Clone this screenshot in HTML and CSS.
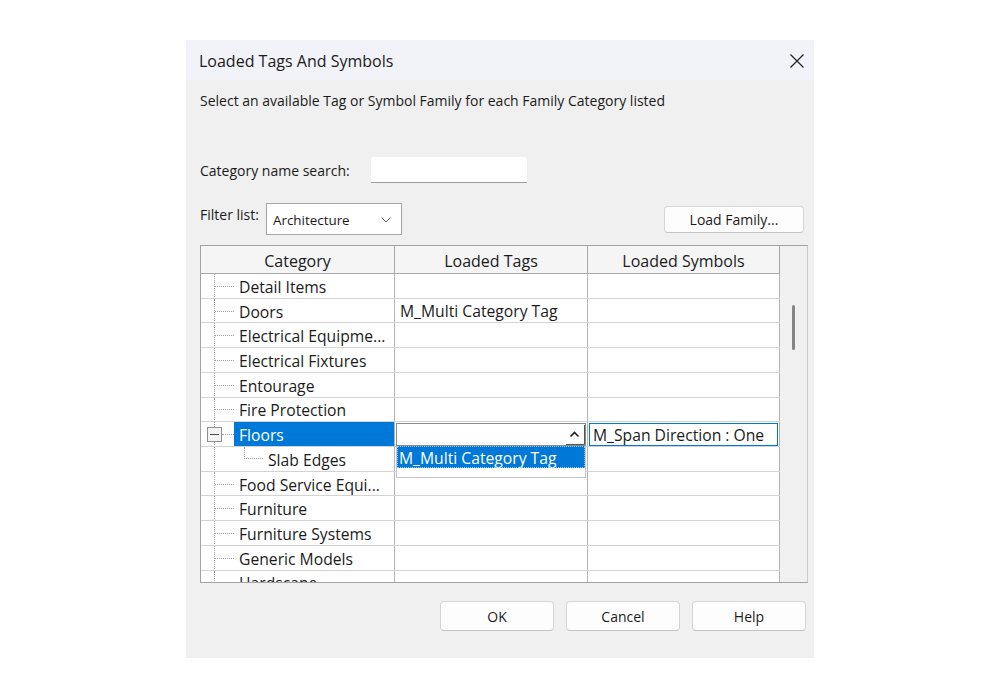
FILE: index.html
```html
<!DOCTYPE html>
<html lang="en">
<head>
<meta charset="utf-8">
<title>Loaded Tags And Symbols</title>
<link rel="stylesheet" href="styles.css">
</head>
<body>
<div class="dialog">
  <div class="titlebar">
    <span class="title">Loaded Tags And Symbols</span>
    <button class="close" aria-label="Close">
      <svg width="16" height="16" viewBox="0 0 16 16"><path d="M1.5 1.5 L14.5 14.5 M14.5 1.5 L1.5 14.5" stroke="#1f1f1f" stroke-width="1.2" fill="none"/></svg>
    </button>
  </div>

  <div class="content">
    <p class="hint">Select an available Tag or Symbol Family for each Family Category listed</p>

    <div class="search-row">
      <label class="label search-label">Category name search:</label>
      <div class="search"></div>
    </div>

    <div class="filter-row">
      <label class="label filter-label">Filter list:</label>
      <div class="select">
        <span>Architecture</span>
        <svg width="10" height="6" viewBox="0 0 10 6"><path d="M0.5 0.5 L5 5 L9.5 0.5" stroke="#666" stroke-width="1" fill="none"/></svg>
      </div>
      <button class="btn load-btn">Load Family...</button>
    </div>

    <div class="grid">
      <div class="table">
        <div class="thead">
          <div class="th c1">Category</div>
          <div class="th c2">Loaded Tags</div>
          <div class="th c3">Loaded Symbols</div>
        </div>

        <div class="row">
          <div class="td c1 tree"><span class="guide"></span><span class="name">Detail Items</span></div>
          <div class="td c2"></div><div class="td c3"></div>
        </div>
        <div class="row">
          <div class="td c1 tree"><span class="guide"></span><span class="name">Doors</span></div>
          <div class="td c2"><span class="val">M_Multi Category Tag</span></div><div class="td c3"></div>
        </div>
        <div class="row">
          <div class="td c1 tree"><span class="guide"></span><span class="name">Electrical Equipme...</span></div>
          <div class="td c2"></div><div class="td c3"></div>
        </div>
        <div class="row">
          <div class="td c1 tree"><span class="guide"></span><span class="name">Electrical Fixtures</span></div>
          <div class="td c2"></div><div class="td c3"></div>
        </div>
        <div class="row">
          <div class="td c1 tree"><span class="guide"></span><span class="name">Entourage</span></div>
          <div class="td c2"></div><div class="td c3"></div>
        </div>
        <div class="row">
          <div class="td c1 tree"><span class="guide"></span><span class="name">Fire Protection</span></div>
          <div class="td c2"></div><div class="td c3"></div>
        </div>
        <div class="row">
          <div class="td c1 tree"><span class="guide"><span class="toggle"><span class="minus"></span></span></span><span class="name selected">Floors</span></div>
          <div class="td c2 editing">
            <div class="combo">
              <span class="combo-btn">
                <svg width="20" height="22" viewBox="0 0 20 22"><path d="M5.5 12.5 L9.5 8.5 L13.5 12.5" stroke="#222" stroke-width="1.6" fill="none"/><path d="M1 20.5 H19.5 M19.5 1 V20.5" stroke="#555" stroke-width="1"/></svg>
              </span>
            </div>
            <div class="dropdown">
              <div class="option active">M_Multi Category Tag</div>
            </div>
          </div>
          <div class="td c3 focused"><span class="val">M_Span Direction : One</span></div>
        </div>
        <div class="row">
          <div class="td c1 tree"><span class="guide nobranch"></span><span class="subguide"></span><span class="name">Slab Edges</span></div>
          <div class="td c2"></div><div class="td c3"></div>
        </div>
        <div class="row">
          <div class="td c1 tree"><span class="guide"></span><span class="name">Food Service Equi...</span></div>
          <div class="td c2"></div><div class="td c3"></div>
        </div>
        <div class="row">
          <div class="td c1 tree"><span class="guide"></span><span class="name">Furniture</span></div>
          <div class="td c2"></div><div class="td c3"></div>
        </div>
        <div class="row">
          <div class="td c1 tree"><span class="guide"></span><span class="name">Furniture Systems</span></div>
          <div class="td c2"></div><div class="td c3"></div>
        </div>
        <div class="row">
          <div class="td c1 tree"><span class="guide"></span><span class="name">Generic Models</span></div>
          <div class="td c2"></div><div class="td c3"></div>
        </div>
        <div class="row">
          <div class="td c1 tree"><span class="guide"></span><span class="name">Hardscape</span></div>
          <div class="td c2"></div><div class="td c3"></div>
        </div>
      </div>
      <div class="vscroll"><div class="thumb"></div></div>
    </div>

    <div class="actions">
      <button class="btn">OK</button>
      <button class="btn">Cancel</button>
      <button class="btn">Help</button>
    </div>
  </div>
</div>
</body>
</html>
```

FILE: styles.css
```css
* { box-sizing: border-box; }

body {
  margin: 0;
  background: #ffffff;
  font-family: "Open Sans", "Noto Sans", sans-serif;
  color: #1b1b1b;
}

.dialog {
  margin: 41px 0 0 187px;
  width: 626px;
  height: 617px;
  background: #f0f0f0;
  display: flex;
  flex-direction: column;
  box-shadow: 0 0 0 1px rgba(0, 0, 0, 0.05);
}

/* title bar */
.titlebar {
  height: 39px;
  background: #f2f3f8;
  display: flex;
  align-items: center;
  justify-content: space-between;
  padding: 0 8px 0 12px;
}
.title { font-size: 16px; }
.close {
  border: 0;
  background: transparent;
  padding: 0;
  width: 16px;
  height: 16px;
  display: flex;
}

/* body */
.content {
  flex: 1;
  display: flex;
  flex-direction: column;
  padding: 0 5px 0 13px;
}
.hint {
  margin: 13px 0 0;
  font-size: 14px;
  line-height: 16px;
}
.label { font-size: 14px; }

.search-row {
  margin-top: 48px;
  height: 26px;
  display: flex;
  align-items: center;
}
.search-label { width: 171px; }
.search {
  width: 156px;
  height: 26px;
  background: #fff;
  border-radius: 3px 3px 0 0;
  border-bottom: 1px solid #9c9c9c;
}

.filter-row {
  margin-top: 20px;
  height: 32px;
  display: flex;
  align-items: center;
}
.filter-label { width: 66px; align-self: flex-start; padding-top: 2px; }
.select {
  width: 136px;
  height: 32px;
  background: #fff;
  border: 1px solid #a6a6a6;
  display: flex;
  align-items: center;
  justify-content: space-between;
  padding: 2px 10px 0 6px;
  font-size: 13.4px;
}
.btn {
  font-family: inherit;
  font-size: 14px;
  color: #1b1b1b;
  background: #fdfdfd;
  border: 1px solid #d6d6d6;
  border-bottom-color: #c4c4c4;
  border-radius: 4px;
}
.load-btn {
  margin-left: auto;
  margin-right: 4px;
  width: 140px;
  height: 27px;
}

/* category grid */
.grid {
  margin-top: 10px;
  height: 338px;
  border: 1px solid #a3a3a3;
  border-right-color: #c9c9c9;
  display: flex;
  overflow: hidden;
  background: #f0f0f0;
}
.table {
  width: 579px;
  display: flex;
  flex-direction: column;
  flex-shrink: 0;
}
.thead {
  height: 28px;
  flex-shrink: 0;
  display: flex;
  background: #f5f5f5;
  border-bottom: 1px solid #a8a8a8;
}
.th {
  display: flex;
  align-items: center;
  justify-content: center;
  font-size: 16px;
  border-right: 1px solid #a8a8a8;
  padding-top: 2px;
}
.c1 { width: 194px; }
.c2 { width: 193px; }
.c3 { width: 192px; }

.row {
  height: 24.72px;
  flex-shrink: 0;
  display: flex;
  background: #fff;
  border-bottom: 1px solid #d3d3d3;
}
.td {
  border-right: 1px solid #b4b4b4;
  display: flex;
  align-items: center;
  font-size: 15.7px;
  white-space: nowrap;
  overflow: hidden;
}
.val { padding: 1px 0 0 5px; }

/* tree connectors */
.tree { align-items: stretch; }
.guide {
  width: 20px;
  margin-left: 13px;
  margin-bottom: -1px;
  border-left: 1px dotted #a0a0a0;
  display: flex;
  align-items: center;
  flex-shrink: 0;
}
.guide::after {
  content: "";
  flex: 1;
  border-top: 1px dotted #a0a0a0;
}
.guide.nobranch::after { display: none; }
.guide.nobranch { width: 30px; }
.toggle {
  width: 15px;
  height: 15px;
  margin-left: -8px;
  border: 1px solid #8f8f8f;
  background: #f3f3f3;
  display: flex;
  align-items: center;
  justify-content: center;
  flex-shrink: 0;
}
.minus { width: 9px; height: 1px; background: #4a4a4a; }
.subguide {
  width: 19px;
  height: 50%;
  flex-shrink: 0;
  border-left: 1px dotted #a0a0a0;
  border-bottom: 1px dotted #a0a0a0;
}
.name {
  display: flex;
  align-items: center;
  padding: 2px 0 0 5px;
  flex: 1;
}
.name.selected {
  background: #0078d7;
  color: #fff;
}

/* in-place editors on the selected row */
.editing {
  position: relative;
  padding: 0 1px;
  overflow: visible;
}
.combo {
  flex: 1;
  height: 23px;
  background: #fff;
  border: 1px solid #8a8a8a;
  display: flex;
  justify-content: flex-end;
}
.combo-btn { display: flex; }
.dropdown {
  position: absolute;
  top: 100%;
  left: 1px;
  width: 190px;
  height: 32px;
  background: #fff;
  border: 1px solid #c6c6c6;
  border-top: 0;
  z-index: 2;
}
.option {
  height: 22px;
  display: flex;
  align-items: center;
  padding: 1px 0 0 2px;
  font-size: 15.7px;
}
.option.active {
  background: #0078d7;
  color: #fff;
  outline: 1px dotted #9fc6ea;
  outline-offset: -1px;
}
.focused {
  padding: 0 1px;
}
.focused .val {
  flex: 1;
  height: 23px;
  display: flex;
  align-items: center;
  padding: 1px 0 0 3px;
  border: 1px solid #0078d7;
}

/* vertical scrollbar */
.vscroll {
  flex: 1;
  background: #f0f0f0;
  display: flex;
  justify-content: center;
  padding: 59px 0 0 0;
}
.thumb {
  width: 3px;
  height: 45px;
  border-radius: 2px;
  background: #858585;
}

/* dialog buttons */
.actions {
  margin-top: 18px;
  display: flex;
  justify-content: flex-end;
  gap: 12px;
  padding-right: 2px;
}
.actions .btn {
  width: 114px;
  height: 30px;
}
```
